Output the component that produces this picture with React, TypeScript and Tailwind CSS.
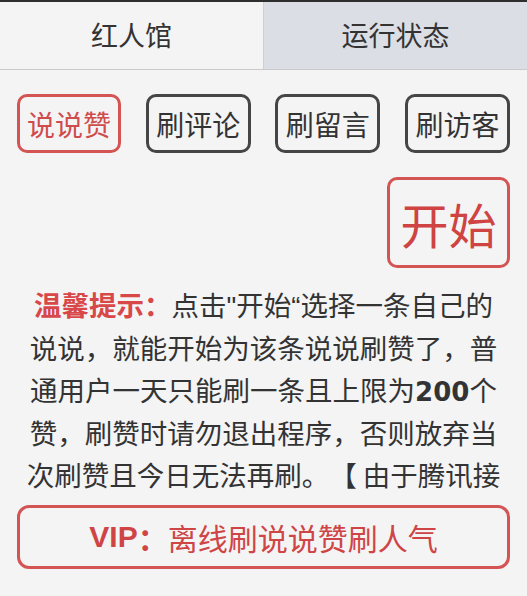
const cjk = "font-['Noto_Sans_CJK_SC',sans-serif]";
const latin = "font-['Liberation_Sans',sans-serif] leading-none";

const actions = ['刷评论', '刷留言', '刷访客'];

export default function App() {
  return (
    <div className={`w-[527px] h-[596px] bg-[#f4f4f5] overflow-hidden ${cjk}`}>
      {/* Tabs */}
      <div className="flex h-[70px] border-t-2 border-[#2e2e2e] border-b border-b-[#c9c9cc]">
        <div className="flex-1 flex items-center justify-center text-[27px] text-[#333] bg-[#f4f4f5] border-r border-[#cfd0d4]">
          红人馆
        </div>
        <div className="flex-1 flex items-center justify-center text-[27px] text-[#333] bg-[#dcdee5]">
          运行状态
        </div>
      </div>

      <div className="px-[17px]">
        {/* Action buttons */}
        <div className="flex justify-between mt-[24px]">
          <button className="w-[104px] h-[59px] flex items-center justify-center rounded-[10px] border-[3px] border-[#d45454] text-[28px] text-[#cf4c4c] leading-none">
            说说赞
          </button>
          {actions.map((a) => (
            <button
              key={a}
              className="w-[105px] h-[59px] flex items-center justify-center rounded-[10px] border-[3px] border-[#454545] text-[28px] text-[#333] leading-none"
            >
              {a}
            </button>
          ))}
        </div>

        {/* Start */}
        <div className="flex justify-end mt-[24px]">
          <button className="w-[123px] h-[91px] flex items-center justify-center rounded-[10px] border-[3px] border-[#d45454] text-[48px] text-[#cf4343] leading-none">
            开始
          </button>
        </div>

        {/* Notice */}
        <div className="h-[212px] mt-[15px] overflow-hidden px-[7px]">
          <p className="text-[27.5px] leading-[42.5px] text-[#333] text-center [text-spacing-trim:space-all]">
            <span className="font-bold text-[#d94848] leading-none">温馨提示：</span>
            点击<span className={latin}>"</span>开始<span className={latin}>“</span>选择一条自己的说说，就能开始为该条说说刷赞了，普通用户一天只能刷一条且上限为
            <span className="font-['DejaVu_Sans',sans-serif] font-bold text-[26px] leading-none">200</span>
            个赞，刷赞时请勿退出程序，否则放弃当次刷赞且今日无法再刷。【 由于腾讯接口限制，刷赞速度可能较慢，请耐心等待 】
          </p>
        </div>

        {/* VIP */}
        <button className="w-full h-[64px] mt-[10px] flex items-center justify-center rounded-[12px] border-[3px] border-[#d45454] text-[30px] text-[#cf4545] leading-none">
          <span className={`${latin} font-black`}>VIP</span>
          <span className="font-bold">：</span>
          <span>离线刷说说赞刷人气</span>
        </button>
      </div>
    </div>
  );
}
